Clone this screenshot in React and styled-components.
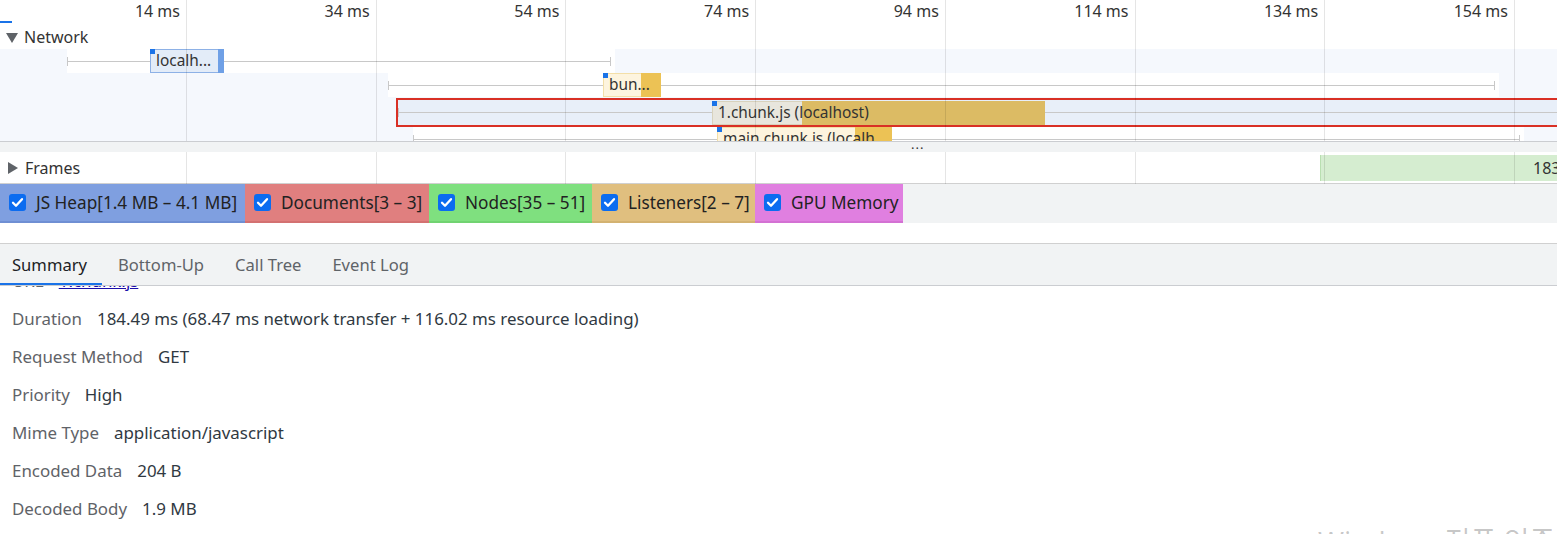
import React from "react";
import styled, { createGlobalStyle } from "styled-components";

const GlobalStyle = createGlobalStyle`
  html, body {
    margin: 0;
    padding: 0;
    background: #fff;
    overflow: hidden;
  }
  body {
    font-family: "Segoe UI", "Noto Sans", "Open Sans", sans-serif;
    color: #303942;
  }
`;

const TICKS = ["14 ms", "34 ms", "54 ms", "74 ms", "94 ms", "114 ms", "134 ms", "154 ms"];
const tickX = (i) => 186 + i * 189.7;

const REQUESTS = [
  { start: 67, end: 611, barStart: 150, split: 218, barEnd: 224, label: "localh...", kind: "doc", height: 24 },
  { start: 388, end: 1495, barStart: 603, split: 641, barEnd: 661, label: "bun...", kind: "script", height: 25 },
  { start: 398, end: 1600, barStart: 712, split: 802, barEnd: 1045, label: "1.chunk.js (localhost)", kind: "script", height: 29, selected: true, boxStart: 396 },
  { start: 413, end: 1520, barStart: 717, split: 855, barEnd: 892, label: "main.chunk.js (localh", kind: "script", height: 24 },
];

const COUNTERS = [
  { label: "JS Heap[1.4 MB – 4.1 MB]", color: "#7f9fe0", edge: "#6f8fd3", width: 245 },
  { label: "Documents[3 – 3]", color: "#e07f7f", edge: "#d37171", width: 184 },
  { label: "Nodes[35 – 51]", color: "#7fe07f", edge: "#71d371", width: 163 },
  { label: "Listeners[2 – 7]", color: "#e0bf7f", edge: "#d3b271", width: 163 },
  { label: "GPU Memory", color: "#e07fe0", edge: "#d371d3", width: 148 },
];

const DETAILS = [
  { label: "URL", value: "1.chunk.js", link: true },
  { label: "Duration", value: "184.49 ms (68.47 ms network transfer + 116.02 ms resource loading)" },
  { label: "Request Method", value: "GET" },
  { label: "Priority", value: "High" },
  { label: "Mime Type", value: "application/javascript" },
  { label: "Encoded Data", value: "204 B" },
  { label: "Decoded Body", value: "1.9 MB" },
];

const Page = styled.div`
  position: relative;
  width: 1557px;
  height: 534px;
  overflow: hidden;
  font-size: 16px;
`;

const Timeline = styled.div`
  position: relative;
`;

const GridLayer = styled.div`
  position: absolute;
  inset: 0;
  pointer-events: none;
  z-index: 3;
`;

const GridLine = styled.div`
  position: absolute;
  top: 0;
  bottom: 0;
  width: 1px;
  background: rgba(0, 0, 0, 0.1);
`;

const Ruler = styled.div`
  position: relative;
  height: 24px;
`;

const TickLabel = styled.span`
  position: absolute;
  top: 1px;
  transform: translateX(-100%);
  padding-right: 6px;
  color: #333;
  white-space: nowrap;
  line-height: 20px;
`;

const OverviewMark = styled.div`
  position: absolute;
  left: 0;
  top: 21px;
  width: 12px;
  height: 2px;
  background: #1a73e8;
`;

const TrackHeader = styled.div`
  display: flex;
  align-items: center;
  gap: 6px;
  height: 25px;
  padding-left: 6px;
  color: #333;
`;

const Caret = ({ open }) => (
  <svg width="12" height="12" viewBox="0 0 12 12">
    {open ? <path d="M0 2h12L6 12z" fill="#5f6368" /> : <path d="M1 0l10 6-10 6z" fill="#5f6368" />}
  </svg>
);

const Track = styled.div`
  height: 92px;
  overflow: hidden;
  background: #f5f8fd;
`;

const RequestRow = styled.div`
  position: relative;
  height: ${(p) => p.$h}px;
`;

const Span = styled.div`
  position: absolute;
  top: 0;
  height: 24px;
  background: #fff;
`;

const SelectBox = styled.div`
  position: absolute;
  top: 0;
  right: -4px;
  height: 29px;
  box-sizing: border-box;
  border: 2.5px solid #d93025;
  background: #e8eff9;
`;

const Whisker = styled.div`
  position: absolute;
  top: ${(p) => p.$top}px;
  height: 1px;
  background: #c8c8c8;
  &::before,
  &::after {
    content: "";
    position: absolute;
    top: -4px;
    width: 1px;
    height: 9px;
    background: #c8c8c8;
  }
  &::before { left: 0; }
  &::after { right: 0; }
`;

const Bar = styled.div`
  position: absolute;
  top: ${(p) => p.$top}px;
  height: 24px;
  display: flex;
  box-sizing: border-box;
`;

const BarWait = styled.div`
  height: 100%;
  box-sizing: border-box;
  background: ${(p) => (p.$kind === "doc" ? "#e3ecf8" : p.$selected ? "#e8e6dd" : "#fdf4de")};
  border: 1px solid ${(p) => (p.$kind === "doc" ? "#8db1e6" : p.$selected ? "#d8d2bd" : "#f3dfa8")};
  border-right: none;
`;

const BarLoad = styled.div`
  height: 100%;
  background: ${(p) => (p.$kind === "doc" ? "#6fa0e6" : p.$selected ? "#dcbb64" : "#ecc255")};
`;

const BarLabel = styled.span`
  position: absolute;
  left: 6px;
  top: 0;
  font-size: 15.4px;
  line-height: 24px;
  color: #333;
  white-space: nowrap;
`;

const BarDot = styled.span`
  position: absolute;
  left: 0;
  top: 0;
  width: 5px;
  height: 5px;
  background: #1a73e8;
`;

const MoreBand = styled.div`
  position: relative;
  z-index: 4;
  height: 11px;
  border-top: 1px solid #cbcdd1;
  background: #f1f3f4;
  box-sizing: border-box;
`;

const MoreDots = styled.span`
  position: absolute;
  left: 911px;
  top: -3px;
  font-size: 13px;
  line-height: 11px;
  letter-spacing: 1px;
  color: #333;
`;

const FramesRow = styled.div`
  position: relative;
  display: flex;
  align-items: center;
  gap: 6px;
  height: 31px;
  padding-left: 7px;
  color: #333;
  border-bottom: 1px solid #d0d0d0;
`;

const FrameBlock = styled.div`
  position: absolute;
  left: 1320px;
  top: 3px;
  right: 0;
  height: 26px;
  background: #d5edd0;
  border-left: 1px solid #b9dfb1;
  color: #333;
  line-height: 26px;
  padding-left: 212px;
  white-space: nowrap;
  overflow: hidden;
`;

const Counters = styled.div`
  display: flex;
  height: 39px;
  background: #f1f3f4;
`;

const Counter = styled.label`
  display: flex;
  align-items: center;
  gap: 10px;
  width: ${(p) => p.$w}px;
  box-sizing: border-box;
  padding-left: 9px;
  background: ${(p) => p.$color};
  border-bottom: 2px solid ${(p) => p.$edge};
  color: #222;
  font-size: 17.2px;
  white-space: nowrap;
`;

const CheckMark = () => (
  <svg width="17" height="17" viewBox="0 0 17 17">
    <rect width="17" height="17" rx="3" fill="#0b6cf0" />
    <path d="M4 8.8l3 3 6-6.6" fill="none" stroke="#fff" strokeWidth="2.3" strokeLinecap="round" strokeLinejoin="round" />
  </svg>
);

const Spacer = styled.div`
  height: 20px;
  border-bottom: 1px solid #d0d0d0;
`;

const TabBar = styled.div`
  display: flex;
  height: 41px;
  background: #f1f3f4;
  border-bottom: 1px solid #cbcdd1;
`;

const Tab = styled.div`
  display: flex;
  align-items: center;
  padding: 0 15px 0 ${(p) => (p.$first ? 12 : 16)}px;
  font-size: 16.6px;
  color: ${(p) => (p.$active ? "#202124" : "#5f6368")};
  box-shadow: ${(p) => (p.$active ? "inset 0 -2px 0 #1a73e8" : "none")};
  white-space: nowrap;
`;

const Details = styled.div`
  height: 250px;
  overflow: hidden;
  font-size: 16.9px;
`;

const DetailList = styled.div`
  margin-top: -25px;
  padding-left: 12px;
`;

const DetailRow = styled.div`
  display: flex;
  gap: 15px;
  height: 38px;
  align-items: center;
  white-space: nowrap;
`;

const DetailLabel = styled.span`
  color: #5f6368;
`;

const DetailValue = styled.span`
  color: ${(p) => (p.$link ? "#1a0dab" : "#303942")};
  text-decoration: ${(p) => (p.$link ? "underline" : "none")};
`;

const Watermark = styled.div`
  position: absolute;
  left: 1318px;
  top: 520px;
  font-family: "Segoe UI", "Noto Sans", "Noto Sans CJK KR", sans-serif;
  font-size: 28px;
  color: rgba(0, 0, 0, 0.22);
  white-space: nowrap;
  pointer-events: none;
`;

const RequestTrack = () => (
  <Track>
    {REQUESTS.map((r) => (
      <RequestRow key={r.label} $h={r.height}>
        {r.selected ? (
          <SelectBox style={{ left: r.boxStart }} />
        ) : (
          <Span style={{ left: r.start, width: r.end - r.start + 4 }} />
        )}
        <Whisker $top={r.selected ? 14 : 12} style={{ left: r.start, width: r.end - r.start }} />
        <Bar $top={r.selected ? 3 : 0} style={{ left: r.barStart, width: r.barEnd - r.barStart }}>
          <BarWait $kind={r.kind} $selected={r.selected} style={{ width: r.split - r.barStart }} />
          <BarLoad $kind={r.kind} $selected={r.selected} style={{ width: r.barEnd - r.split }} />
          <BarDot />
          <BarLabel>{r.label}</BarLabel>
        </Bar>
      </RequestRow>
    ))}
  </Track>
);

export default function App() {
  return (
    <Page>
      <GlobalStyle />
      <Timeline>
        <GridLayer>
          {TICKS.map((t, i) => (
            <GridLine key={t} style={{ left: tickX(i) }} />
          ))}
        </GridLayer>
        <Ruler>
          <OverviewMark />
          {TICKS.map((t, i) => (
            <TickLabel key={t} style={{ left: tickX(i) }}>
              {t}
            </TickLabel>
          ))}
        </Ruler>
        <TrackHeader>
          <Caret open />
          Network
        </TrackHeader>
        <RequestTrack />
        <MoreBand>
          <MoreDots>...</MoreDots>
        </MoreBand>
        <FramesRow>
          <Caret />
          Frames
          <FrameBlock>183.</FrameBlock>
        </FramesRow>
      </Timeline>
      <Counters>
        {COUNTERS.map((c) => (
          <Counter key={c.label} $color={c.color} $edge={c.edge} $w={c.width}>
            <CheckMark />
            {c.label}
          </Counter>
        ))}
      </Counters>
      <Spacer />
      <TabBar>
        <Tab $first $active>Summary</Tab>
        <Tab>Bottom-Up</Tab>
        <Tab>Call Tree</Tab>
        <Tab>Event Log</Tab>
      </TabBar>
      <Details>
        <DetailList>
          {DETAILS.map((d) => (
            <DetailRow key={d.label}>
              <DetailLabel>{d.label}</DetailLabel>
              <DetailValue $link={d.link}>{d.value}</DetailValue>
            </DetailRow>
          ))}
        </DetailList>
      </Details>
      <Watermark>Windows 정품 인증</Watermark>
    </Page>
  );
}
